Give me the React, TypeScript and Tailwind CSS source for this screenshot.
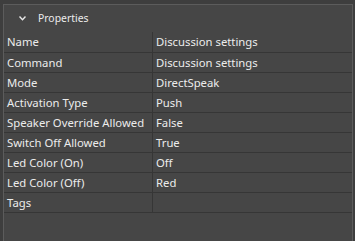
const rows: [string, string][] = [
  ["Name", "Discussion settings"],
  ["Command", "Discussion settings"],
  ["Mode", "DirectSpeak"],
  ["Activation Type", "Push"],
  ["Speaker Override Allowed", "False"],
  ["Switch Off Allowed", "True"],
  ["Led Color (On)", "Off"],
  ["Led Color (Off)", "Red"],
  ["Tags", ""],
];

export default function App() {
  return (
    <div className="h-[241px] w-[355px] overflow-hidden bg-[#3e3e3e] pl-[3px] pr-[2px] pt-[4px] font-['Segoe_UI','Noto_Sans',sans-serif] text-[11.3px] text-[#ececec]">
      <div className="h-full border-l border-r border-t border-[#5c5c5c] bg-[#464646]">
        <div className="flex h-[27px] items-center">
          <svg className="ml-[15px]" width="7" height="5" viewBox="0 0 7 5" aria-hidden="true">
            <path d="M0.5 0.5 L3.5 3.8 L6.5 0.5" fill="none" stroke="#e8e8e8" strokeWidth="1.4" />
          </svg>
          <span className="ml-[12px] text-[10.4px]">Properties</span>
        </div>
        <div className="border-b border-[#363636]">
          {rows.map(([k, v], i) => (
            <div
              key={k}
              className={`grid h-[20px] grid-cols-[149px_1fr] ${i > 0 ? "border-t border-[#363636]" : ""}`}
            >
              <div className="flex items-center border-r border-[#363636] pl-[3px] leading-none whitespace-nowrap">
                {k}
              </div>
              <div className="flex items-center pl-[3px] leading-none whitespace-nowrap">{v}</div>
            </div>
          ))}
        </div>
      </div>
    </div>
  );
}
